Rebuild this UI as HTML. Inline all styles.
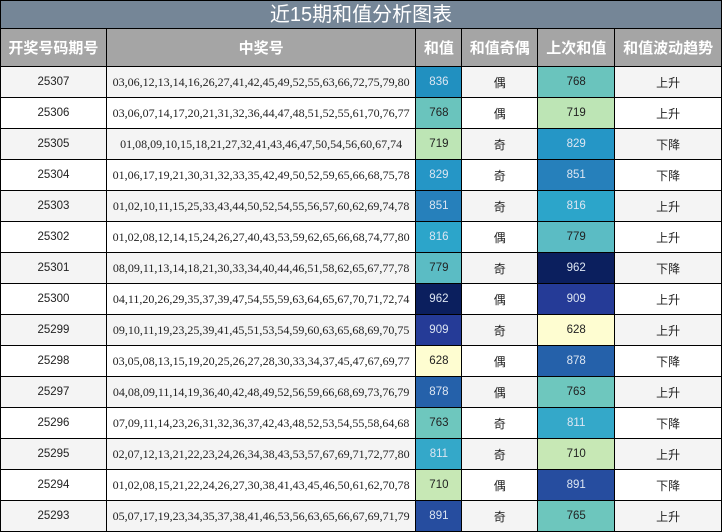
<!DOCTYPE html>
<html><head><meta charset="utf-8"><style>
*{margin:0;padding:0;box-sizing:border-box}
body{width:722px;height:532px;overflow:hidden;background:#fff;font-family:"Liberation Sans","Noto Sans CJK SC",sans-serif;}
.wrap{border-left:1px solid #000;border-right:1px solid #000;width:722px}
.title{height:29px;background:#758697;color:#fff;font-size:20px;text-align:center;line-height:28px;border-bottom:1px solid #000;border-top:1px solid #000}
.r{display:flex;height:31px;border-bottom:1px solid #000}
.r div{border-left:1px solid #000;display:flex;align-items:center;justify-content:center;font-size:12px;color:#222}
.r div:first-child{border-left:none}
.c1{width:105px}.c2{width:310px}.c3{width:46px}.c4{width:76px}.c5{width:77px}.c6{width:107px}
.r .c1{font-size:11.5px}
.r .c2{font-family:"Liberation Serif",serif;font-size:12px;letter-spacing:0}
.r .c3,.r .c5{font-size:11.5px}
.o div{background:#f4f4f4}
.e div{background:#fff}
.r.h{height:38px}
.r.h div{background:#a5a5a5;color:#fff;font-weight:bold;font-size:15px;font-family:"Liberation Sans","Noto Sans CJK SC",sans-serif}
.l{color:#dde6f2 !important}
</style></head><body><div class="wrap">
<div class="title">近15期和值分析图表</div>
<div class="r h"><div class="c1">开奖号码期号</div><div class="c2">中奖号</div><div class="c3">和值</div><div class="c4">和值奇偶</div><div class="c5">上次和值</div><div class="c6">和值波动趋势</div></div>
<div class="r o"><div class="c1">25307</div><div class="c2">03,06,12,13,14,16,26,27,41,42,45,49,52,55,63,66,72,75,79,80</div><div class="c3 l" style="background:#2190c0">836</div><div class="c4">偶</div><div class="c5" style="background:#6ac4bd">768</div><div class="c6">上升</div></div>
<div class="r e"><div class="c1">25306</div><div class="c2">03,06,07,14,17,20,21,31,32,36,44,47,48,51,52,55,61,70,76,77</div><div class="c3" style="background:#6ac4bd">768</div><div class="c4">偶</div><div class="c5" style="background:#bde5b5">719</div><div class="c6">上升</div></div>
<div class="r o"><div class="c1">25305</div><div class="c2">01,08,09,10,15,18,21,27,32,41,43,46,47,50,54,56,60,67,74</div><div class="c3" style="background:#bde5b5">719</div><div class="c4">奇</div><div class="c5 l" style="background:#2596c6">829</div><div class="c6">下降</div></div>
<div class="r e"><div class="c1">25304</div><div class="c2">01,06,17,19,21,30,31,32,33,35,42,49,50,52,59,65,66,68,75,78</div><div class="c3 l" style="background:#2596c6">829</div><div class="c4">奇</div><div class="c5 l" style="background:#2680bb">851</div><div class="c6">下降</div></div>
<div class="r o"><div class="c1">25303</div><div class="c2">01,02,10,11,15,25,33,43,44,50,52,54,55,56,57,60,62,69,74,78</div><div class="c3 l" style="background:#2680bb">851</div><div class="c4">奇</div><div class="c5 l" style="background:#2ca5ca">816</div><div class="c6">上升</div></div>
<div class="r e"><div class="c1">25302</div><div class="c2">01,02,08,12,14,15,24,26,27,40,43,53,59,62,65,66,68,74,77,80</div><div class="c3 l" style="background:#2ca5ca">816</div><div class="c4">偶</div><div class="c5" style="background:#5bbcc4">779</div><div class="c6">上升</div></div>
<div class="r o"><div class="c1">25301</div><div class="c2">08,09,11,13,14,18,21,30,33,34,40,44,46,51,58,62,65,67,77,78</div><div class="c3" style="background:#5bbcc4">779</div><div class="c4">奇</div><div class="c5 l" style="background:#0b1f5e">962</div><div class="c6">下降</div></div>
<div class="r e"><div class="c1">25300</div><div class="c2">04,11,20,26,29,35,37,39,47,54,55,59,63,64,65,67,70,71,72,74</div><div class="c3 l" style="background:#0b1f5e">962</div><div class="c4">偶</div><div class="c5 l" style="background:#253b97">909</div><div class="c6">上升</div></div>
<div class="r o"><div class="c1">25299</div><div class="c2">09,10,11,19,23,25,39,41,45,51,53,54,59,60,63,65,68,69,70,75</div><div class="c3 l" style="background:#253b97">909</div><div class="c4">奇</div><div class="c5" style="background:#fefdd1">628</div><div class="c6">上升</div></div>
<div class="r e"><div class="c1">25298</div><div class="c2">03,05,08,13,15,19,20,25,26,27,28,30,33,34,37,45,47,67,69,77</div><div class="c3" style="background:#fefdd1">628</div><div class="c4">偶</div><div class="c5 l" style="background:#2561aa">878</div><div class="c6">下降</div></div>
<div class="r o"><div class="c1">25297</div><div class="c2">04,08,09,11,14,19,36,40,42,48,49,52,56,59,66,68,69,73,76,79</div><div class="c3 l" style="background:#2561aa">878</div><div class="c4">偶</div><div class="c5" style="background:#6ec7be">763</div><div class="c6">上升</div></div>
<div class="r e"><div class="c1">25296</div><div class="c2">07,09,11,14,23,26,31,32,36,37,42,43,48,52,53,54,55,58,64,68</div><div class="c3" style="background:#6ec7be">763</div><div class="c4">奇</div><div class="c5 l" style="background:#34a8c9">811</div><div class="c6">下降</div></div>
<div class="r o"><div class="c1">25295</div><div class="c2">02,07,12,13,21,22,23,24,26,34,38,43,53,57,67,69,71,72,77,80</div><div class="c3 l" style="background:#34a8c9">811</div><div class="c4">奇</div><div class="c5" style="background:#c7e8b5">710</div><div class="c6">上升</div></div>
<div class="r e"><div class="c1">25294</div><div class="c2">01,02,08,15,21,22,24,26,27,30,38,41,43,45,46,50,61,62,70,78</div><div class="c3" style="background:#c7e8b5">710</div><div class="c4">偶</div><div class="c5 l" style="background:#264d9f">891</div><div class="c6">下降</div></div>
<div class="r o"><div class="c1">25293</div><div class="c2">05,07,17,19,23,34,35,37,38,41,46,53,56,63,65,66,67,69,71,79</div><div class="c3 l" style="background:#264d9f">891</div><div class="c4">奇</div><div class="c5" style="background:#6dc6bd">765</div><div class="c6">上升</div></div>
</div></body></html>
